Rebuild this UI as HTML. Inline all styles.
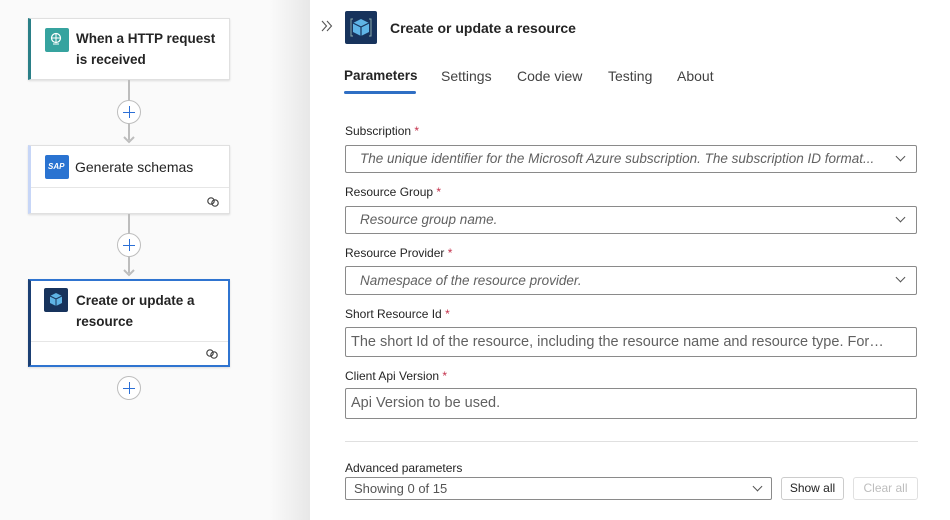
<!DOCTYPE html>
<html><head><meta charset="utf-8"><style>
*{box-sizing:border-box;margin:0;padding:0}
body{width:950px;height:520px;overflow:hidden;background:#fafafa;font-family:"Liberation Sans",sans-serif;position:relative;color:#242424}
.a{position:absolute}
.card{position:absolute;background:#fff;border:1px solid #e0e0e0;box-shadow:0 1px 2px rgba(0,0,0,.12);left:28px;width:202px}
.ttl{position:absolute;left:48px;font-size:13.5px;font-weight:bold;line-height:21px;color:#242424}
.ico{position:absolute;left:15px;top:9px;width:24px;height:24px;border-radius:2px}
.line{position:absolute;left:128px;width:2px;background:#bdbdbd}
.plus{position:absolute;left:117px;width:24px;height:24px;border:1px solid #bdbdbd;border-radius:50%;background:#fff}
.plus:before{content:"";position:absolute;left:5px;top:10.5px;width:12px;height:1.5px;background:#2b6fd6}
.plus:after{content:"";position:absolute;left:10.5px;top:5px;width:1.5px;height:12px;background:#2b6fd6}
.arr{position:absolute;left:123px;width:12px;height:8px;}
.lab{position:absolute;left:345px;font-size:12px;color:#242424}
.lab b{color:#c4314b;font-weight:normal}
.fld{position:absolute;left:345px;width:572px;border:1px solid #8a8a8a;border-radius:2px;background:#fff;font-size:13.5px;color:#616161;padding-left:14px;white-space:nowrap;overflow:hidden}
.fld i{display:block;width:515px;overflow:hidden;text-overflow:ellipsis}
.chev{position:absolute;right:12px;top:7px;width:7px;height:7px;border-right:1.2px solid #555;border-bottom:1.2px solid #555;transform:rotate(45deg)}
.tab{position:absolute;top:68px;font-size:14px;color:#424242}
.link{position:absolute;right:9px;bottom:6px}
</style></head><body>
<div class="a" style="left:270px;top:0;width:42px;height:520px;background:linear-gradient(90deg,rgba(0,0,0,0),rgba(0,0,0,.08))"></div>
<div class="a" style="left:310px;top:0;width:640px;height:520px;background:#fff"></div>

<div class="card" style="top:18px;height:62px;border-left:3px solid #2a7f87">
<div class="ico" style="background:#36a39f;left:14px"><svg width="24" height="24"><circle cx="11" cy="10" r="4.5" fill="none" stroke="#fff" stroke-width="1.2"/><path d="M6.5 10h9M11 5.5v9M8 16h6" stroke="#fff" stroke-width="1"/></svg></div>
<div class="ttl" style="top:9px;left:45px">When a HTTP request<br>is received</div>
</div>
<div class="line" style="top:80px;height:22px"></div>
<div class="plus" style="top:100px"></div>
<div class="line" style="top:124px;height:16px"></div>
<svg class="arr" style="top:136px" width="12" height="8"><path d="M1 1l5 5 5-5" stroke="#bdbdbd" stroke-width="2" fill="none"/></svg>

<div class="card" style="top:145px;height:69px;border-left:3px solid #c7d6f7">
<div class="ico" style="background:#2a73d1;left:14px;top:9px"><span style="color:#fff;font-size:8px;font-weight:bold;position:absolute;left:3px;top:7px;font-style:italic">SAP</span></div>
<div class="ttl" style="top:11px;left:44px;font-weight:normal;font-size:14px">Generate schemas</div>
<div class="a" style="left:0;right:0;top:41px;border-top:1px solid #e6e6e6"></div>
<svg class="link" width="14" height="10"><circle cx="5" cy="4" r="3.2" fill="none" stroke="#444" stroke-width="1.2"/><circle cx="9" cy="6" r="3.2" fill="none" stroke="#444" stroke-width="1.2"/></svg>
</div>
<div class="line" style="top:214px;height:20px"></div>
<div class="plus" style="top:233px"></div>
<div class="line" style="top:257px;height:16px"></div>
<svg class="arr" style="top:269px" width="12" height="8"><path d="M1 1l5 5 5-5" stroke="#bdbdbd" stroke-width="2" fill="none"/></svg>

<div class="card" style="top:279px;height:88px;border:2px solid #2f74d0;border-left:3px solid #1b3f73">
<div class="ico" style="background:#17335c;left:13px;top:7px"><svg width="24" height="24"><path d="M12 5l6 3v7l-6 3-6-3V8z" fill="#5fb4e6"/><path d="M6 8l6 3 6-3M12 11v7" stroke="#17335c" stroke-width="1" fill="none"/></svg></div>
<div class="ttl" style="top:9px;left:45px">Create or update a<br>resource</div>
<div class="a" style="left:0;right:0;top:60px;border-top:1px solid #e6e6e6"></div>
<svg class="link" width="14" height="10"><circle cx="5" cy="4" r="3.2" fill="none" stroke="#444" stroke-width="1.2"/><circle cx="9" cy="6" r="3.2" fill="none" stroke="#444" stroke-width="1.2"/></svg>
</div>
<div class="plus" style="top:376px"></div>

<svg class="a" style="left:321px;top:20px" width="12" height="12"><path d="M1 1l4.5 5L1 11M6 1l4.5 5L6 11" stroke="#555" stroke-width="1.1" fill="none"/></svg>
<div class="a" style="left:345px;top:11px;width:32px;height:33px;background:#17335c;border-radius:2px"><svg width="32" height="33"><path d="M16 8l8 4v9l-8 4-8-4v-9z" fill="#5fb4e6"/><path d="M8 12l8 4 8-4M16 16v9" stroke="#17335c" stroke-width="1.2" fill="none"/><path d="M8 8h-2v17h2M24 8h2v17h-2" stroke="#8aa" stroke-width="1" fill="none"/></svg></div>
<div class="a" style="left:390px;top:20px;font-size:14px;font-weight:bold">Create or update a resource</div>

<div class="tab" style="left:344px;color:#242424;font-weight:bold;font-size:13.5px">Parameters</div>
<div class="a" style="left:344px;top:91px;width:72px;height:3px;background:#2f6fc4;border-radius:2px"></div>
<div class="tab" style="left:441px">Settings</div>
<div class="tab" style="left:517px">Code view</div>
<div class="tab" style="left:608px">Testing</div>
<div class="tab" style="left:677px">About</div>

<div class="lab" style="top:124px">Subscription <b>*</b></div>
<div class="fld" style="top:145px;height:28px;line-height:26px"><i>The unique identifier for the  Microsoft Azure subscription. The subscription ID format...</i><div class="chev"></div></div>
<div class="lab" style="top:185px">Resource Group <b>*</b></div>
<div class="fld" style="top:206px;height:28px;line-height:26px"><i>Resource group name.</i><div class="chev"></div></div>
<div class="lab" style="top:246px">Resource Provider <b>*</b></div>
<div class="fld" style="top:266px;height:29px;line-height:27px"><i>Namespace of the resource provider.</i><div class="chev"></div></div>
<div class="lab" style="top:307px">Short Resource Id <b>*</b></div>
<div class="fld" style="top:327px;height:30px;line-height:28px;padding-left:5px;font-size:14.5px"><span style="display:block;width:540px;overflow:hidden;text-overflow:ellipsis">The short Id of the resource, including the resource name and resource type. Format...</span></div>
<div class="lab" style="top:369px">Client Api Version <b>*</b></div>
<div class="fld" style="top:388px;height:31px;line-height:29px;padding-left:5px;font-size:14.5px">Api Version to be used.</div>

<div class="a" style="left:345px;top:441px;width:573px;border-top:1px solid #e0e0e0"></div>
<div class="lab" style="top:461px">Advanced parameters</div>
<div class="a" style="left:345px;top:477px;width:427px;height:23px;border:1px solid #8a8a8a;border-radius:2px;font-size:13px;color:#555;padding-left:8px;line-height:21px">Showing 0 of 15<div class="chev" style="top:5px;right:10px"></div></div>
<div class="a" style="left:781px;top:477px;width:63px;height:23px;border:1px solid #ccc;border-radius:3px;font-size:12px;text-align:center;line-height:21px">Show all</div>
<div class="a" style="left:853px;top:477px;width:65px;height:23px;border:1px solid #e0e0e0;border-radius:3px;font-size:12px;text-align:center;line-height:21px;color:#bdbdbd">Clear all</div>
</body></html>
